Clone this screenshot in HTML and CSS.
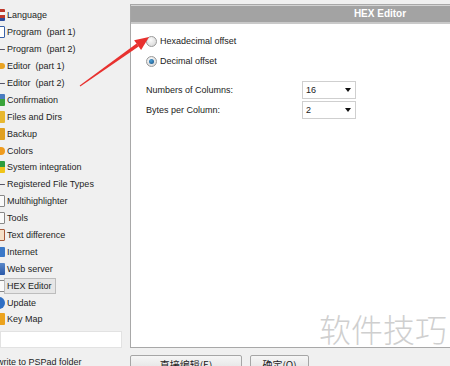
FILE: index.html
```html
<!DOCTYPE html>
<html>
<head>
    <meta charset="UTF-8">
    <title>HEX Editor</title>
    <link rel="stylesheet" href="styles.css">
</head>
<body>
<div class="dialog">
    <div class="main">
        <!--左侧列表-->
        <div class="sidebar">
            <ul class="tree">
                <li><span class="ico ico-flag"></span>Language</li>
                <li><span class="ico ico-doc"></span>Program&nbsp; (part 1)</li>
                <li><span class="ico ico-line"></span>Program&nbsp; (part 2)</li>
                <li><span class="ico ico-arrow"></span>Editor&nbsp; (part 1)</li>
                <li><span class="ico ico-line"></span>Editor&nbsp; (part 2)</li>
                <li><span class="ico ico-check"></span>Confirmation</li>
                <li><span class="ico ico-folder"></span>Files and Dirs</li>
                <li><span class="ico ico-backup"></span>Backup</li>
                <li><span class="ico ico-colors"></span>Colors</li>
                <li><span class="ico ico-sys"></span>System integration</li>
                <li><span class="ico ico-line"></span>Registered File Types</li>
                <li><span class="ico ico-box"></span>Multihighlighter</li>
                <li><span class="ico ico-box"></span>Tools</li>
                <li><span class="ico ico-diff"></span>Text difference</li>
                <li><span class="ico ico-net"></span>Internet</li>
                <li><span class="ico ico-web"></span>Web server</li>
                <li class="active"><span class="ico ico-box"></span><span class="label">HEX Editor</span></li>
                <li><span class="ico ico-update"></span>Update</li>
                <li><span class="ico ico-key"></span>Key Map</li>
            </ul>
            <div class="search"></div>
        </div>
        <!--右侧面板-->
        <div class="panel">
            <div class="panel-title">HEX Editor</div>
            <div class="panel-body">
                <label class="radio"><span class="dot"></span>Hexadecimal offset</label>
                <label class="radio"><span class="dot checked"></span>Decimal offset</label>
                <div class="fields">
                    <span>Numbers of Columns:</span>
                    <div class="select">16<i></i></div>
                    <span>Bytes per Column:</span>
                    <div class="select">2<i></i></div>
                </div>
            </div>
        </div>
    </div>
    <div class="footer">
        <div class="overwrite">write to PSPad folder</div>
        <div class="buttons">
            <div class="btn btn-wide">直接编辑(E)</div>
            <div class="btn">确定(O)</div>
        </div>
    </div>
</div>
<div class="watermark">软件技巧</div>
<svg class="arrow" width="450" height="366" viewBox="0 0 450 366">
    <polygon fill="#e8312f" points="79.7,85.6 80.3,86.4 138.6,46.6 136.6,43.6"/>
    <polygon fill="#e8312f" points="149,37 141.1,50 134.1,40.2"/>
</svg>
</body>
</html>
```
FILE: styles.css
```css
* {
    margin: 0;
    padding: 0;
    box-sizing: border-box;
}
html, body {
    width: 450px;
    height: 366px;
    overflow: hidden;
}
body {
    background-color: #f0f0f0;
    font-family: "Liberation Sans", Arial, "Noto Sans CJK SC", sans-serif;
    font-size: 9px;
    color: #1e1e1e;
    position: relative;
}
ul {
    list-style: none;
}
.dialog {
    display: flex;
    flex-direction: column;
}
.main {
    display: flex;
    height: 348px;
}
.sidebar {
    width: 130px;
    flex-shrink: 0;
    display: flex;
    flex-direction: column;
    padding-top: 7px;
}
.tree {
    height: 328px;
}
.tree li {
    height: 16.9px;
    display: flex;
    align-items: center;
    white-space: nowrap;
}
.ico {
    width: 16px;
    height: 12px;
    margin-left: -11px;
    margin-right: 2px;
    flex-shrink: 0;
    border-radius: 1px;
}
.ico-flag { background: linear-gradient(#c0392b 0 25%, #f4f4f4 25% 50%, #c0392b 50% 75%, #2e4fa0 75%); }
.ico-doc { border: 1px solid #3a62a8; background: #fff; }
.ico-line { height: 1px; background: #556; }
.ico-arrow { height: 6px; background: #e9a322; border-radius: 3px; }
.ico-check { background: linear-gradient(#4a7cc0 0 40%, #3aa33a 40%); }
.ico-folder { background: #e8b830; }
.ico-backup { background: #e0a020; }
.ico-colors { height: 8px; background: #ef9b1d; border-radius: 4px; }
.ico-sys { background: linear-gradient(#2e9e3e 0 50%, #f0c419 50%); }
.ico-box { border: 1px solid #888; background: #fafafa; }
.ico-diff { border: 1px solid #a85a3a; background: #f6e0c8; }
.ico-net { background: #3a78c8; height: 10px; }
.ico-web { background: linear-gradient(#5a88c8, #2a58a8); }
.ico-update { background: #2f6fc4; border-radius: 6px; }
.ico-key { background: #eca31e; }
.tree li.active .label {
    background-color: #e6e6e6;
    border: 1px solid #bdbdbd;
    padding: 2px 3px 2px 2px;
    margin-left: -3px;
}
.search {
    width: 122px;
    height: 17px;
    background-color: #fff;
    border: 1px solid #e2e2e2;
}
.panel {
    width: 500px;
    flex-shrink: 0;
    margin-top: 4px;
    border: 1px solid #a8a8a8;
    background-color: #fff;
    display: flex;
    flex-direction: column;
}
.panel-title {
    height: 19px;
    background-color: #a3a3a3;
    border-top: 1px solid #d4d4d4;
    border-bottom: 2px solid #c9c9c9;
    color: #fff;
    font-weight: bold;
    font-size: 10px;
    text-align: center;
    line-height: 16px;
}
.panel-body {
    padding: 7px 0 0 15px;
    display: flex;
    flex-direction: column;
}
.radio {
    height: 20px;
    display: flex;
    align-items: center;
    color: #222;
}
.dot {
    width: 11px;
    height: 11px;
    border-radius: 50%;
    border: 1px solid #9a9a9a;
    background: radial-gradient(circle at 40% 35%, #fbfbfb, #d2d2d2);
    margin-right: 3px;
    display: flex;
    align-items: center;
    justify-content: center;
}
.dot.checked::after {
    content: "";
    width: 5px;
    height: 5px;
    border-radius: 50%;
    background: radial-gradient(circle at 40% 35%, #4aa0d8, #154e80);
}
.fields {
    margin-top: 10px;
    display: grid;
    grid-template-columns: 156px 54px;
    row-gap: 2px;
    align-items: center;
    color: #222;
}
.select {
    height: 18px;
    border: 1px solid #cfcfcf;
    background-color: #fff;
    padding-left: 3px;
    display: flex;
    align-items: center;
    justify-content: space-between;
}
.select i {
    width: 0;
    height: 0;
    border-left: 3.5px solid transparent;
    border-right: 3.5px solid transparent;
    border-top: 4px solid #111;
    margin-right: 4px;
}
.footer {
    display: flex;
    height: 18px;
}
.overwrite {
    width: 133px;
    flex-shrink: 0;
    margin-left: -3px;
    padding-top: 9px;
    white-space: nowrap;
}
.buttons {
    display: flex;
    gap: 8px;
    padding-top: 7px;
}
.btn {
    width: 59px;
    height: 20px;
    border: 1px solid #a6a6a6;
    border-radius: 2px;
    background: linear-gradient(#f6f6f6, #dedede);
    text-align: center;
    font-family: "Noto Sans CJK SC", sans-serif;
    font-size: 10px;
    line-height: 17px;
    color: #222;
}
.btn-wide {
    width: 112px;
}
.watermark {
    position: absolute;
    left: 319px;
    top: 305px;
    font-family: "Noto Sans CJK SC", sans-serif;
    font-weight: 300;
    font-size: 32px;
    color: #cfcfcf;
}
.arrow {
    position: absolute;
    left: 0;
    top: 0;
    pointer-events: none;
}
```
